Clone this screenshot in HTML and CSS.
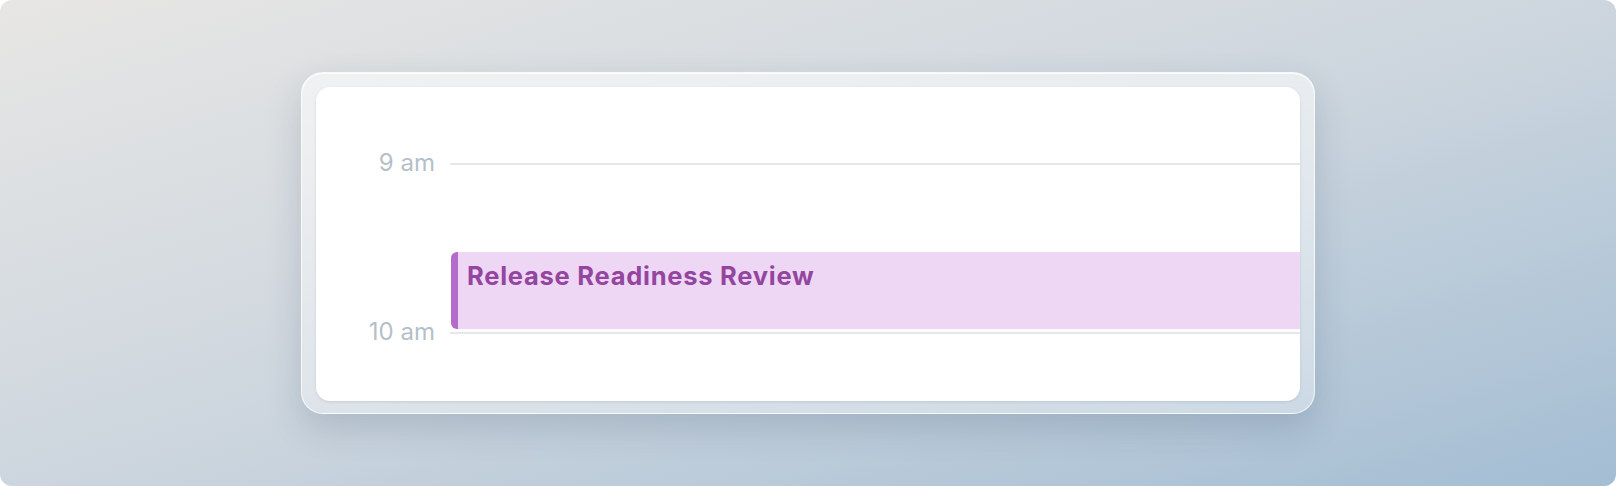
FILE: index.html
```html
<!DOCTYPE html>
<html lang="en">
<head>
<meta charset="utf-8">
<title>Calendar</title>
<link rel="stylesheet" href="styles.css">
</head>
<body>
<div class="page">
  <div class="frame">
    <div class="card">
      <div class="timeline">
        <div class="row">
          <div class="label">9 am</div>
          <div class="rule"></div>
        </div>
        <div class="hour-gap"></div>
        <div class="row">
          <div class="label">10 am</div>
          <div class="rule"></div>
        </div>
        <div class="event">
          <div class="event-title">Release Readiness Review</div>
        </div>
      </div>
    </div>
  </div>
</div>
</body>
</html>
```

FILE: styles.css
```css
html, body {
  margin: 0;
  padding: 0;
  background: #ffffff;
}

.page {
  width: 1616px;
  height: 486px;
  border-radius: 12px;
  overflow: hidden;
  background: linear-gradient(to bottom right, #e7e6e4 0%, #cdd6de 50%, #a3bdd3 100%);
  display: flex;
  align-items: center;
  justify-content: center;
  font-family: "Inter", "Liberation Sans", sans-serif;
}

.frame {
  padding: 14px 14px 12px;
  border-radius: 22px;
  border: 1px solid rgba(255, 255, 255, 0.7);
  background: linear-gradient(to bottom, rgba(255, 255, 255, 0.55), rgba(255, 255, 255, 0.35));
  box-shadow: 0 14px 34px rgba(40, 60, 90, 0.18), inset 0 1px 0 rgba(255, 255, 255, 0.8);
}

.card {
  width: 984px;
  height: 314px;
  box-sizing: border-box;
  padding-top: 63px;
  background: #ffffff;
  border-radius: 14px;
  overflow: hidden;
  box-shadow: 0 1px 3px rgba(40, 60, 90, 0.12);
}

.timeline {
  position: relative;
  display: flex;
  flex-direction: column;
}

.row {
  display: flex;
  align-items: center;
  gap: 15px;
  height: 28px;
}

.label {
  width: 119px;
  flex: none;
  text-align: right;
  font-size: 24px;
  color: #b5bfca;
  padding-bottom: 4px;
}

.rule {
  flex: 1;
  height: 2px;
  background: #e5e8eb;
}

.hour-gap {
  height: 141px;
}

.event {
  position: absolute;
  left: 135px;
  right: -20px;
  top: 102px;
  height: 77px;
  box-sizing: border-box;
  background: #eed7f4;
  border-left: 7px solid #b56bc9;
  border-radius: 6px;
  padding: 9px 0 0 9px;
}

.event-title {
  font-size: 25.5px;
  line-height: 30px;
  font-weight: 700;
  letter-spacing: 0.75px;
  color: #94459f;
}
```
